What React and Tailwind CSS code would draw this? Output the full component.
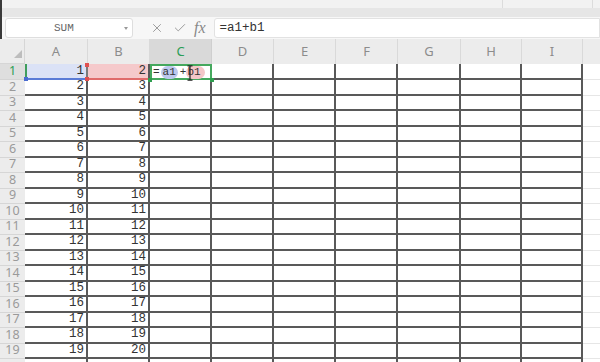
import React from 'react';
import { X, Check } from 'lucide-react';

const cols = ['A', 'B', 'C', 'D', 'E', 'F', 'G', 'H', 'I'];
const rows = Array.from({ length: 20 }, (_, i) => i + 1);

const mono = "font-['Liberation_Mono',monospace]";
const sans = "font-['Noto_Sans',sans-serif]";

const Dot = ({ className }) => (
  <span className={`absolute w-[4px] h-[4px] ${className}`} />
);

const FirstRow = () => (
  <>
    <div className={`flex items-center justify-center bg-[#dedede] border-b border-[#d4d4d4] text-[12.5px] text-[#2a9d55] ${sans}`}>1</div>
    <div className={`relative flex items-center justify-end pr-[2px] bg-[#dbe2f6] border-l-2 border-l-[#3f9d5c] border-b-2 border-b-[#5a7bd6] border-r-2 border-r-[#7a7a7a] text-[12.5px] text-[#333] ${mono}`}>
      1
      <Dot className="-left-[3px] -bottom-[3px] bg-[#4a6cd0]" />
    </div>
    <div className={`relative flex items-center justify-end pr-[2px] bg-[#f5c9cb] border-b-2 border-b-[#e06b6b] border-r-2 border-r-[#595959] text-[12.5px] text-[#333] ${mono}`}>
      2
      <Dot className="-left-[3px] -top-[1px] bg-[#e05050]" />
      <Dot className="-left-[3px] -bottom-[3px] bg-[#e05050]" />
    </div>
    <div className={`relative flex items-center pl-[1px] border-2 border-[#45a85e] bg-white text-[11px] leading-none text-[#333] ${mono}`}>
      <span>=</span>
      <span className="ml-[1px] px-[2px] py-[1px] rounded-full bg-[#bcc8ee]">a1</span>
      <span className="ml-[2px]">+</span>
      <span className="py-[1px] pl-[1px] pr-[4px] rounded-full bg-[#f4c6c8]">b1</span>
      <svg className="absolute left-[35px] top-[-1px]" width="6" height="16" viewBox="0 0 6 16">
        <path d="M0.5 0.8h2l0.5 0.7 0.5-0.7h2M3 1.5v13M0.5 15.2h2l0.5-0.7 0.5 0.7h2" stroke="#222" strokeWidth="1.2" fill="none" />
      </svg>
      <Dot className="-right-[4px] -bottom-[4px] bg-[#2e9e4f]" />
      <Dot className="-left-[4px] -bottom-[4px] bg-[#2e9e4f]" />
    </div>
    {cols.slice(3).map((c) => (
      <div key={c} className="border-r-2 border-b-2 border-[#595959]" />
    ))}
    <div className="border-b border-[#e6e6e6]" />
  </>
);

// the last row is cut off by the window, so its numbers are not shown
const DataRow = ({ n, cut }) => (
  <>
    <div className={`flex items-center justify-center bg-[#ececec] border-b border-[#d6d6d6] text-[12.5px] text-[#9a9a9a] ${sans}`}>{cut ? '' : n}</div>
    <div className={`flex items-center justify-end pr-[2px] border-r-2 border-b-2 border-[#595959] text-[12.5px] text-[#333] ${mono}`}>{cut ? '' : n}</div>
    <div className={`flex items-center justify-end pr-[2px] border-r-2 border-b-2 border-[#595959] text-[12.5px] text-[#333] ${mono}`}>{cut ? '' : n + 1}</div>
    {cols.slice(2).map((c) => (
      <div key={c} className="border-r-2 border-b-2 border-[#595959]" />
    ))}
    <div className="border-b border-[#e6e6e6]" />
  </>
);

export default function App() {
  return (
    <div className="w-[600px] h-[362px] overflow-hidden bg-white flex flex-col">
      {/* window chrome */}
      <div className="shrink-0 h-[8px] flex bg-[#f2f2f2] border-l-2 border-[#3a3a3a]">
        <div className="w-[501px] border-r border-[#dcdcdc]" />
        <div className="w-[90px] border-r border-[#dcdcdc]" />
      </div>
      <div className="shrink-0 h-[9px] bg-[#e6e6e6] border-l-2 border-[#3a3a3a]" />

      {/* formula bar */}
      <div className="shrink-0 h-[22px] flex items-center bg-[#f7f7f7] border-l-2 border-[#3a3a3a] pl-[3px]">
        <div className="relative w-[128px] h-[20px] bg-white border border-[#dedede] rounded-[3px] flex items-center">
          <span className={`ml-[48px] text-[11px] text-[#666] ${mono}`}>SUM</span>
          <span className="absolute right-[4px] top-[8px] w-0 h-0 border-l-[2px] border-r-[2px] border-t-[3px] border-l-transparent border-r-transparent border-t-[#999]" />
        </div>
        <X size={14} strokeWidth={1.4} className="ml-[17px] text-[#888]" />
        <Check size={14} strokeWidth={1.4} className="ml-[9px] text-[#888]" />
        <span className="ml-[7px] text-[16px] italic leading-none text-[#888] font-['Liberation_Serif',serif]">fx</span>
        <div className="ml-[8px] flex-1 h-[20px] bg-white border border-[#e2e2e2] rounded-l-[3px] flex items-center pl-[5px]">
          <span className={`text-[12.5px] text-[#333] ${mono}`}>=a1+b1</span>
        </div>
      </div>

      {/* sheet */}
      <div className="shrink-0 grid grid-cols-[25px_63px_62px_62px_62px_62px_62px_63px_61px_61px_1fr] grid-rows-[25px_16px_repeat(19,15.5px)]">
        <div className="relative bg-[#ececec] border-b border-r border-[#d6d6d6]">
          <svg className="absolute left-[14px] bottom-[5px]" width="8" height="8" viewBox="0 0 8 8">
            <path d="M8 0V8H0Z" fill="#bdbdbd" />
          </svg>
        </div>
        {cols.map((c) => (
          <div
            key={c}
            className={
              c === 'C'
                ? `flex items-center justify-center bg-[#d9d9d9] border-r border-[#cfcfcf] text-[13px] text-[#2a9d55] ${sans}`
                : `flex items-center justify-center bg-[#ececec] border-r border-[#d9d9d9] text-[13px] text-[#8c8c8c] ${sans}`
            }
          >
            {c}
          </div>
        ))}
        <div className="bg-[#ececec]" />
        <FirstRow />
        {rows.slice(1).map((n) => (
          <DataRow key={n} n={n} cut={n === 20} />
        ))}
      </div>
    </div>
  );
}
